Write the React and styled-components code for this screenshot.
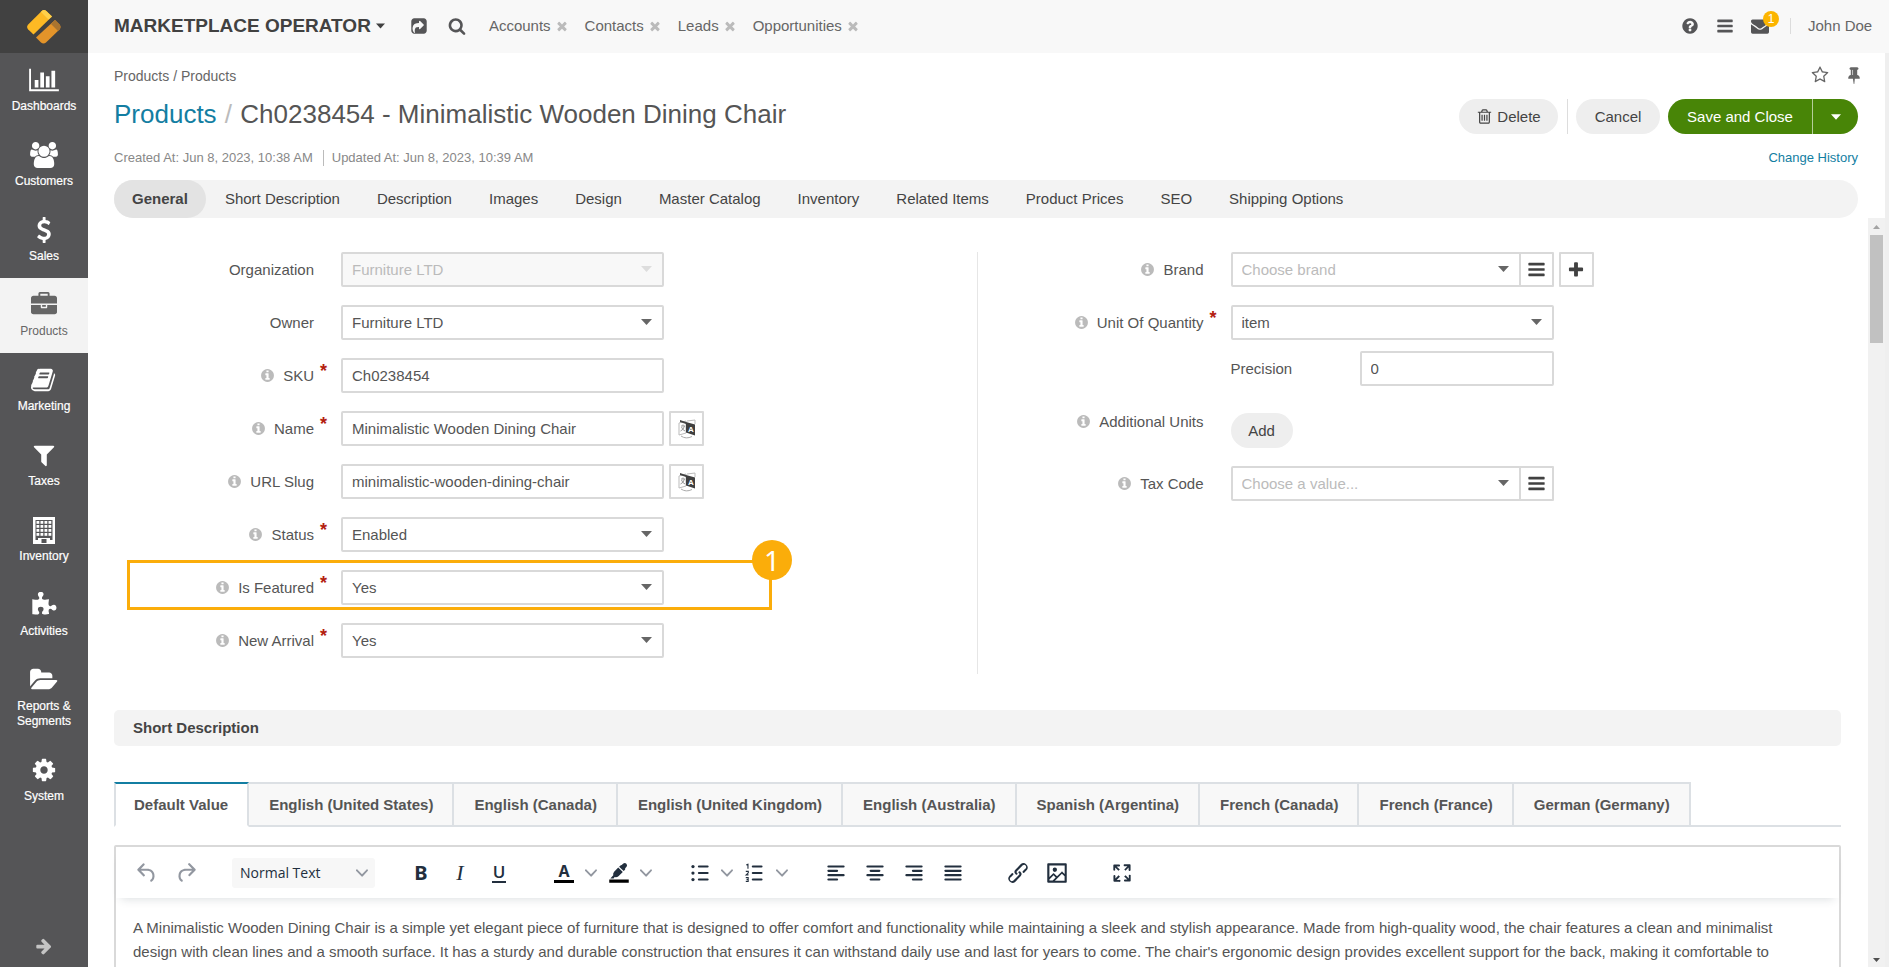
import React from "react";
import styled, { createGlobalStyle, css } from "styled-components";

const GlobalStyle = createGlobalStyle`
  *, *::before, *::after { box-sizing: border-box; }
  body {
    margin: 0;
    background: #fff;
    color: #555;
    font: 15px/20px "Liberation Sans", Arial, sans-serif;
  }
  button, input, select { font: inherit; color: inherit; margin: 0; }
  button { border: 0; padding: 0; background: none; cursor: pointer; }
  a { color: inherit; text-decoration: none; }
  svg { display: block; flex: none; }
`;

/* ---------- icons ---------- */

const DISC =
  "M1664 896q0 209-103 385.5t-279.5 279.5-385.5 103-385.5-103-279.5-279.5-103-385.5 103-385.5 279.5-279.5 385.5-103 385.5 103 279.5 279.5 103 385.5z";

const ICONS = {
  chart: [2048, "M640 896v512h-256v-512h256zm384-512v1024h-256v-1024h256zm1024 1152v128h-2048v-1536h128v1408h1920zm-640-896v768h-256v-768h256zm384-384v1152h-256v-1152h256z"],
  users: [2048, "M657 896q-162 5-265 128h-134q-82 0-138-40.5t-56-118.5q0-353 124-353 6 0 43.5 21t97.5 42.5 119 21.5q67 0 133-23-5 37-5 66 0 139 81 256zm1071 637q0 120-73 189.5t-194 69.5h-874q-121 0-194-69.5t-73-189.5q0-53 3.5-103.5t14-109 26.5-108.5 43-97.5 62-81 85.5-53.5 111.5-20q10 0 43 21.5t73 48 107 48 135 21.5 135-21.5 107-48 73-48 43-21.5q61 0 111.5 20t85.5 53.5 62 81 43 97.5 26.5 108.5 14 109 3.5 103.5zm-1024-1277q0 106-75 181t-181 75-181-75-75-181 75-181 181-75 181 75 75 181zm704 384q0 159-112.5 271.5t-271.5 112.5-271.5-112.5-112.5-271.5 112.5-271.5 271.5-112.5 271.5 112.5 112.5 271.5zm576 225q0 78-56 118.5t-138 40.5h-134q-103-123-265-128 81-117 81-256 0-29-5-66 66 23 133 23 59 0 119-21.5t97.5-42.5 43.5-21q124 0 124 353zm-128-609q0 106-75 181t-181 75-181-75-75-181 75-181 181-75 181 75 75 181z"],
  dollar: [1792, "M1362 1185q0 153-99.5 263.5t-258.5 136.5v175q0 14-9 23t-23 9h-135q-13 0-22.5-9.5t-9.5-22.5v-175q-66-9-127.5-31t-101.5-44.5-74-48-46.5-37.5-17.5-18q-17-21-2-41l103-135q7-10 23-12 15-2 24 9l2 2q113 99 243 125 37 8 74 8 81 0 142.5-43t61.5-122q0-28-15-53t-33.5-42-58.5-37.5-66-32-80-32.5q-39-16-61.5-25t-61.5-26.5-62.5-31-56.5-35.5-53.5-42.5-43.5-49-35.5-58-21-66.5-8.5-78q0-138 98-242t255-134v-180q0-13 9.5-22.5t22.5-9.5h135q14 0 23 9t9 23v176q57 6 110.5 23t87 33.5 63.5 37.5 39 29 15 14q17 18 5 38l-81 146q-8 15-23 16-14 3-27-7-3-3-14.5-12t-39-26.5-58.5-32-74.5-26-85.5-11.5q-95 0-155 43t-60 111q0 26 8.5 48t29.5 41.5 39.5 33 56 31 60.5 27 70 27.5q53 20 81 31.5t76 35 75.5 42.5 62 50 53 63.5 31.5 76.5 13 94z"],
  briefcase: [1792, "M640 256h512v-128h-512v128zm1152 640v480q0 66-47 113t-113 47h-1472q-66 0-113-47t-47-113v-480h672v160q0 26 19 45t45 19h320q26 0 45-19t19-45v-160h672zm-768 0v128h-256v-128h256zm768-480v384h-1792v-384q0-66 47-113t113-47h352v-160q0-40 28-68t68-28h576q40 0 68 28t28 68v160h352q66 0 113 47t47 113z"],
  book: [1792, "M1639 478q40 57 18 129l-275 906q-19 64-76.5 107.5t-122.5 43.5h-923q-77 0-148.5-53.5t-99.5-131.5q-24-67-2-127 0-4 3-27t4-37q1-8-3-21.5t-3-19.5q2-11 8-21t16.5-23.5 16.5-23.5q23-38 45-91.5t30-91.5q3-10 .5-30t-.5-28q3-11 17-28t17-23q21-36 42-92t25-90q1-9-2.5-32t.5-28q4-13 22-30.5t22-22.5q19-26 42.5-84.5t27.5-96.5q1-8-3-25.5t-2-26.5q2-8 9-18t18-23 17-21q8-12 16.5-30.5t15-35 16-36 19.5-32 26.5-23.5 36-11.5 47.5 5.5l-1 3q38-9 51-9h761q74 0 114 56t18 130l-274 906q-36 119-71.5 153.5t-128.5 34.5h-869q-27 0-38 15-11 16-1 43 24 70 144 70h923q29 0 56-15.5t35-41.5l300-987q7-22 5-57 38 15 59 43zm-1064 2q-4 13 2 22.5t20 9.5h608q13 0 25.5-9.5t16.5-22.5l21-64q4-13-2-22.5t-20-9.5h-608q-13 0-25.5 9.5t-16.5 22.5zm-83 256q-4 13 2 22.5t20 9.5h608q13 0 25.5-9.5t16.5-22.5l21-64q4-13-2-22.5t-20-9.5h-608q-13 0-25.5 9.5t-16.5 22.5z"],
  filter: [1792, "M1595 295q17 41-14 70l-493 493v742q0 42-39 59-13 5-25 5-27 0-45-19l-256-256q-19-19-19-45v-486l-493-493q-31-29-14-70 17-39 59-39h1280q42 0 59 39z"],
  puzzle: [1792, "M1755 1083q0 81-44.5 135t-123.5 54q-41 0-77.5-17.5t-59-38-56.5-38-71-17.5q-110 0-110 124 0 39 16 115t15 115v5q-22 0-33 1-34 3-97.5 11.5t-115.5 13.5-98 5q-61 0-103-26.5t-42-83.5q0-37 17.5-71t38-56.5 38-59 17.5-77.5q0-79-54-123.5t-135-44.5q-84 0-143 45.5t-59 127.5q0 43 15 83t33.5 64.5 33.5 53 15 50.5q0 45-46 89-37 35-117 35-95 0-245-24-9-2-27.5-4t-27.5-4l-13-2q-1 0-3-1-2 0-2-1v-1024q2 1 17.5 3.5t34 5 21.5 3.5q150 24 245 24 80 0 117-35 46-44 46-89 0-22-15-50.5t-33.5-53-33.5-64.5-15-83q0-82 59-127.5t144-45.5q80 0 134 44.5t54 123.5q0 41-17.5 77.5t-38 59-38 56.5-17.5 71q0 57 42 83.5t103 26.5q64 0 180-15t163-17v2q-1 2-3.5 17.5t-5 34-3.5 21.5q-24 150-24 245 0 80 35 117 44 46 89 46 22 0 50.5-15t53-33.5 64.5-33.5 83-15q82 0 127.5 59t45.5 143z"],
  folder: [2048, "M1943 952q0 31-31 66l-336 396q-43 51-120.5 86.5t-143.5 35.5h-1088q-34 0-60.5-13t-26.5-43q0-31 31-66l336-396q43-51 120.5-86.5t143.5-35.5h1088q34 0 60.5 13t26.5 43zm-343-344v160h-832q-94 0-197 47.5t-164 119.5l-337 396-5 6q0-4-.5-12.5t-.5-12.5v-960q0-92 66-158t158-66h320q92 0 158 66t66 158v32h544q92 0 158 66t66 158z"],
  cog: [1792, "M1152 896q0-106-75-181t-181-75-181 75-75 181 75 181 181 75 181-75 75-181zm512-109v222q0 12-8 23t-20 13l-185 28q-19 54-39 91 35 50 107 138 10 12 10 25t-9 23q-27 37-99 108t-94 71q-12 0-26-9l-138-108q-44 23-91 38-16 136-29 186-7 28-36 28h-222q-14 0-24.5-8.5t-11.5-21.5l-28-184q-49-16-90-37l-141 107q-10 9-25 9-14 0-25-11-126-114-165-168-7-10-7-23 0-12 8-23 15-21 51-66.5t54-70.5q-27-50-41-99l-183-27q-13-2-21-12.5t-8-23.5v-222q0-12 8-23t19-13l186-28q14-46 39-92-40-57-107-138-10-12-10-24 0-10 9-23 26-36 98.5-107.5t94.5-71.5q13 0 26 10l138 107q44-23 91-38 16-136 29-186 7-28 36-28h222q14 0 24.5 8.5t11.5 21.5l28 184q49 16 90 37l142-107q9-9 24-9 13 0 25 10 129 119 165 170 7 8 7 22 0 12-8 23-15 21-51 66.5t-54 70.5q26 50 41 98l183 28q13 2 21 12.5t8 23.5z"],
  arrowRight: [1792, "M1600 960q0 54-37 91l-651 651q-39 37-91 37-51 0-90-37l-75-75q-38-38-38-91t38-91l293-293h-704q-52 0-84.5-37.5t-32.5-90.5v-128q0-53 32.5-90.5t84.5-37.5h704l-293-294q-38-36-38-90t38-90l75-75q38-38 90-38 53 0 91 38l651 651q37 35 37 90z"],
  share: [1792, "M1005 1197l352-352q19-19 19-45t-19-45l-352-352q-30-31-69-14-40 17-40 59v160q-119 0-216 19.5t-162.5 51-114 79-76.5 95.5-44.5 109-21.5 111.5-5 110.5q0 181 167 404 11 12 25 12 7 0 13-3 22-9 19-33-44-354 62-473 46-52 130-75.5t224-23.5v160q0 42 40 59 12 5 24 5 26 0 45-19zm659-781v960q0 119-84.5 203.5t-203.5 84.5h-960q-119 0-203.5-84.5t-84.5-203.5v-960q0-119 84.5-203.5t203.5-84.5h960q119 0 203.5 84.5t84.5 203.5z"],
  search: [1792, "M1216 832q0-185-131.5-316.5t-316.5-131.5-316.5 131.5-131.5 316.5 131.5 316.5 316.5 131.5 316.5-131.5 131.5-316.5zm512 832q0 52-38 90t-90 38q-54 0-90-38l-343-342q-179 124-399 124-143 0-273.5-55.5t-225-150-150-225-55.5-273.5 55.5-273.5 150-225 225-150 273.5-55.5 273.5 55.5 225 150 150 225 55.5 273.5q0 220-124 399l343 343q37 37 37 90z"],
  close: [1792, "M1490 1322q0 40-28 68l-136 136q-28 28-68 28t-68-28l-294-294-294 294q-28 28-68 28t-68-28l-136-136q-28-28-28-68t28-68l294-294-294-294q-28-28-28-68t28-68l136-136q28-28 68-28t68 28l294 294 294-294q28-28 68-28t68 28l136 136q28 28 28 68t-28 68l-294 294 294 294q28 28 28 68z"],
  help: [1792, "M1024 1376v-192q0-14-9-23t-23-9h-192q-14 0-23 9t-9 23v192q0 14 9 23t23 9h192q14 0 23-9t9-23zm256-672q0-88-55.5-163t-138.5-116-170-41q-243 0-371 213-15 24 8 42l132 100q7 6 19 6 16 0 25-12 53-68 86-92 34-24 86-24 48 0 85.5 26t37.5 59q0 38-20 61t-68 45q-63 28-115.5 86.5t-52.5 125.5v36q0 14 9 23t23 9h192q14 0 23-9t9-23q0-19 21.5-49.5t54.5-49.5q32-18 49-28.5t46-35 44.5-48 28-60.5 12.5-81z" + DISC],
  info: [1792, "M1152 1376v-160q0-14-9-23t-23-9h-96v-512q0-14-9-23t-23-9h-320q-14 0-23 9t-9 23v160q0 14 9 23t23 9h96v320h-96q-14 0-23 9t-9 23v160q0 14 9 23t23 9h448q14 0 23-9t9-23zm-128-896v-160q0-14-9-23t-23-9h-192q-14 0-23 9t-9 23v160q0 14 9 23t23 9h192q14 0 23-9t9-23z" + DISC],
  bars: [1792, "M1664 1344v128q0 26-19 45t-45 19h-1408q-26 0-45-19t-19-45v-128q0-26 19-45t45-19h1408q26 0 45 19t19 45zm0-512v128q0 26-19 45t-45 19h-1408q-26 0-45-19t-19-45v-128q0-26 19-45t45-19h1408q26 0 45 19t19 45zm0-512v128q0 26-19 45t-45 19h-1408q-26 0-45-19t-19-45v-128q0-26 19-45t45-19h1408q26 0 45 19t19 45z"],
  envelope: [1792, "M1792 710v794q0 66-47 113t-113 47h-1472q-66 0-113-47t-47-113v-794q44 49 101 87 362 246 497 345 57 42 92.5 65.5t94.5 48 110 24.5h2q51 0 110-24.5t94.5-48 92.5-65.5q170-123 498-345 57-39 100-87zm0-294q0 79-49 151t-122 123q-376 261-468 325-10 7-42.5 31t-54 38.5-52 32.5-57.5 27-50 9h-2q-23 0-50-9t-57.5-27-52-32.5-54-38.5-42.5-31q-91-64-262-182.5t-205-142.5q-62-42-117-115.5t-55-136.5q0-78 41.5-130t118.5-52h1472q65 0 112.5 47t47.5 113z"],
  plus: [1792, "M1600 736v192q0 40-28 68t-68 28h-416v416q0 40-28 68t-68 28h-192q-40 0-68-28t-28-68v-416h-416q-40 0-68-28t-28-68v-192q0-40 28-68t68-28h416v-416q0-40 28-68t68-28h192q40 0 68 28t28 68v416h416q40 0 68 28t28 68z"],
  star: [1792, "M1201 1004l306-297-422-62-189-382-189 382-422 62 306 297-73 421 378-199 377 199zm527-357q0 22-26 48l-363 354 86 500q1 7 1 20 0 50-41 50-19 0-40-12l-449-236-449 236q-22 12-40 12-21 0-31.5-14.5t-10.5-35.5q0-6 2-20l86-500-364-354q-25-27-25-48 0-37 56-46l502-73 225-455q19-41 49-41t49 41l225 455 502 73q56 9 56 46z"],
  pin: [1792, "M800 864v-448q0-14-9-23t-23-9-23 9-9 23v448q0 14 9 23t23 9 23-9 9-23zm672 352q0 26-19 45t-45 19h-429l-51 483q-2 12-10.5 20.5t-20.5 8.5h-1q-27 0-32-27l-76-485h-404q-26 0-45-19t-19-45q0-123 78.5-221.5t177.5-98.5v-512q-52 0-90-38t-38-90 38-90 90-38h640q52 0 90 38t38 90-38 90-90 38v512q99 0 177.5 98.5t78.5 221.5z"],
  trash: [1792, "M704 736v576q0 14-9 23t-23 9h-64q-14 0-23-9t-9-23v-576q0-14 9-23t23-9h64q14 0 23 9t9 23zm256 0v576q0 14-9 23t-23 9h-64q-14 0-23-9t-9-23v-576q0-14 9-23t23-9h64q14 0 23 9t9 23zm256 0v576q0 14-9 23t-23 9h-64q-14 0-23-9t-9-23v-576q0-14 9-23t23-9h64q14 0 23 9t9 23zm128 724v-948h-896v948q0 22 7 40.5t14.5 27 10.5 8.5h832q3 0 10.5-8.5t14.5-27 7-40.5zm-672-1076h448l-48-117q-7-9-17-11h-317q-10 2-17 11zm928 32v64q0 14-9 23t-23 9h-96v948q0 83-47 143.5t-113 60.5h-832q-66 0-113-58.5t-47-141.5v-952h-96q-14 0-23-9t-9-23v-64q0-14 9-23t23-9h309l70-167q15-37 54-63t79-26h320q40 0 79 26t54 63l70 167h309q14 0 23 9t9 23z"],
};

const Icon = ({ name, size = 18 }) => {
  const [w, d] = ICONS[name];
  return (
    <svg viewBox={`0 0 ${w} 1792`} height={size} width={Math.round((size * w) / 1792)} fill="currentColor" aria-hidden="true">
      <path fillRule="evenodd" d={d} />
    </svg>
  );
};

const BuildingIcon = () => (
  <svg width="26" height="27" viewBox="0 0 26 27" aria-hidden="true">
    <path fill="currentColor" d="M2 0h22v27H2z" />
    <path fill="#555557" d="M4.500 3h17v20H19v-2H7v2H4.500zM10.500 22h5v4h-5z" />
    <g fill="currentColor">
      {[4, 8, 12, 16].map((y) =>
        [6, 10, 14, 18].map((x) => <rect key={`${x}-${y}`} x={x - 0.5} y={y} width="2.800" height="2.800" />)
      )}
    </g>
  </svg>
);

const Logo = () => (
  <svg width="34" height="34" viewBox="0 0 34 34" aria-hidden="true">
    <path fill="#fdb924" d="M14.500 1.200Q17-1.200 19.500 1.200L25 6.500 6.500 24.500 1.200 19.500Q-1 17 1.200 14.500Z" />
    <path fill="#ffd04a" d="M14.500 1.200Q17-1.200 19.500 1.200L25 6.500 21.500 9.500 14 2z" />
    <path fill="#e3942a" d="M28 10L32.500 14.500Q34.500 17 32.500 19.500L19 32.500Q16.500 34.500 14 32.500L9 27.500Z" />
    <path fill="#a9742f" d="M28 10L32.500 14.500Q34.500 17 32.500 19.500L31 21 24 14z" />
  </svg>
);

const TranslateIcon = () => (
  <svg width="18" height="20" viewBox="0 0 18 20" aria-hidden="true">
    <path d="M1 4l7-2v12l-7 2z" fill="#fff" stroke="#bbb" />
    <path d="M2 1l6 2v2L2 3z" fill="#444" />
    <path d="M3 7h4M5 5.500v1.500M6.500 7q-1 4-4 5M3.500 8q1 3 3.500 4" fill="none" stroke="#999" />
    <path d="M9 2l8-1v4" fill="none" stroke="#bbb" />
    <path d="M8 3l9 2.500v11l-9-3z" fill="#3f3f3f" />
    <text x="10" y="13" fontSize="8" fontWeight="700" fill="#fff">A</text>
    <path d="M3 17q5 3.500 11 .5" fill="none" stroke="#aaa" />
  </svg>
);

const Caret = ({ width = 11 }) => (
  <svg width={width} height="6" viewBox="0 0 11 6" fill="currentColor" aria-hidden="true">
    <path d="M0 0h11L5.500 6z" />
  </svg>
);

const EDITOR_ICONS = {
  undo: <path d="M6.400 8H12c3.700 0 6.200 2 6.800 5.100.6 2.700-.4 5.600-2.300 6.800a1 1 0 0 1-1-1.800c1.100-.6 1.800-2.700 1.400-4.600-.5-2.100-2.100-3.500-4.900-3.500H6.400l3.300 3.300a1 1 0 1 1-1.400 1.400l-5-5a1 1 0 0 1 0-1.400l5-5a1 1 0 0 1 1.400 1.400L6.400 8Z" />,
  redo: <path d="M17.600 10H12c-2.800 0-4.400 1.400-4.900 3.500-.4 2 .3 4 1.400 4.600a1 1 0 1 1-1 1.800c-2-1.200-2.900-4.100-2.300-6.800.6-3 3-5.100 6.800-5.100h5.600l-3.300-3.300a1 1 0 1 1 1.400-1.400l5 5a1 1 0 0 1 0 1.400l-5 5a1 1 0 0 1-1.400-1.400l3.300-3.300Z" />,
  highlight: (
    <>
      <path d="M3 18h18v3H3z" fill="#000" />
      <path d="M14.500 4.500l1.500-1.300q1.500-1 2.800.2 1.200 1.300.2 2.800l-1.300 1.500q.3.900-.4 1.500l-1 1-4.200-4 1-1q.6-.7 1.400-.7zM11.300 7l4.200 4-4 4q-1.500 1.300-3.500.8L7 17H4l2.700-3q-.5-1.700.8-3.200z" />
    </>
  ),
  bullets: (
    <>
      <path d="M11 5h8a1 1 0 0 1 0 2h-8a1 1 0 0 1 0-2Zm0 6h8a1 1 0 0 1 0 2h-8a1 1 0 0 1 0-2Zm0 6h8a1 1 0 0 1 0 2h-8a1 1 0 0 1 0-2Z" />
      <circle cx="5.500" cy="6" r="1.500" />
      <circle cx="5.500" cy="12" r="1.500" />
      <circle cx="5.500" cy="18" r="1.500" />
    </>
  ),
  numbers: (
    <>
      <path d="M10 5h8a1 1 0 0 1 0 2h-8a1 1 0 0 1 0-2Zm0 6h8a1 1 0 0 1 0 2h-8a1 1 0 0 1 0-2Zm0 6h8a1 1 0 0 1 0 2h-8a1 1 0 0 1 0-2Z" />
      <path d="M4 4.500l1.500-.5v4M3.500 10.500h2.300v1.300l-2 1.900H6M3.500 16.300h2.200v3.400H3.500M4.200 18h1.500" fill="none" stroke="currentColor" />
    </>
  ),
  left: <path d="M5 5h14a1 1 0 0 1 0 2H5a1 1 0 0 1 0-2Zm0 4h8a1 1 0 0 1 0 2H5a1 1 0 0 1 0-2Zm0 4h14a1 1 0 0 1 0 2H5a1 1 0 0 1 0-2Zm0 4h8a1 1 0 0 1 0 2H5a1 1 0 0 1 0-2Z" />,
  center: <path d="M5 5h14a1 1 0 0 1 0 2H5a1 1 0 0 1 0-2Zm3 4h8a1 1 0 0 1 0 2H8a1 1 0 0 1 0-2Zm-3 4h14a1 1 0 0 1 0 2H5a1 1 0 0 1 0-2Zm3 4h8a1 1 0 0 1 0 2H8a1 1 0 0 1 0-2Z" />,
  right: <path d="M5 5h14a1 1 0 0 1 0 2H5a1 1 0 0 1 0-2Zm6 4h8a1 1 0 0 1 0 2h-8a1 1 0 0 1 0-2Zm-6 4h14a1 1 0 0 1 0 2H5a1 1 0 0 1 0-2Zm6 4h8a1 1 0 0 1 0 2h-8a1 1 0 0 1 0-2Z" />,
  justify: <path d="M5 5h14a1 1 0 0 1 0 2H5a1 1 0 0 1 0-2Zm0 4h14a1 1 0 0 1 0 2H5a1 1 0 0 1 0-2Zm0 4h14a1 1 0 0 1 0 2H5a1 1 0 0 1 0-2Zm0 4h14a1 1 0 0 1 0 2H5a1 1 0 0 1 0-2Z" />,
  link: <path d="M6.200 12.300a1 1 0 0 1 1.400 1.400l-2 2a2 2 0 1 0 2.600 2.800l4.800-4.800a1 1 0 0 0 0-1.400 1 1 0 1 1 1.400-1.300 2.900 2.900 0 0 1 0 4L9.600 20a3.900 3.900 0 0 1-5.500-5.500l2-2Zm11.600-.6a1 1 0 0 1-1.400-1.400l2-2a2 2 0 1 0-2.600-2.800L11 10.300a1 1 0 0 0 0 1.400A1 1 0 1 1 9.600 13a2.900 2.900 0 0 1 0-4L14.400 4a3.900 3.900 0 0 1 5.500 5.500l-2 2Z" />,
  image: <path d="m5 15.700 3.300-3.200c.3-.3.700-.3 1 0L12 15l4.100-4c.3-.4.8-.4 1 0l2 1.900V5H5v10.700ZM5 18V19h3l2.800-2.900-2-2L5 17.900Zm14-3-2.500-2.400-6.400 6.500H19v-4ZM4 3h16c.6 0 1 .4 1 1v16c0 .6-.4 1-1 1H4a1 1 0 0 1-1-1V4c0-.6.4-1 1-1Zm6 8a2 2 0 1 0 0-4 2 2 0 0 0 0 4Z" />,
  fullscreen: <path d="m15.300 10-1.200-1.300 2.900-3h-2.300a.9.9 0 1 1 0-1.700H19c.5 0 .9.4.9.9v4.400a.9.9 0 1 1-1.800 0V7l-2.900 3Zm0 4 3 3v-2.300a.9.9 0 1 1 1.700 0V19c0 .5-.4.9-.9.9h-4.400a.9.9 0 1 1 0-1.800H17l-3-2.900 1.300-1.200ZM10 15.400l-2.900 3h2.300a.9.9 0 1 1 0 1.700H5a.9.9 0 0 1-.9-.9v-4.400a.9.9 0 1 1 1.800 0V17l2.900-3 1.200 1.300ZM8.700 10 5.700 7v2.300a.9.9 0 0 1-1.700 0V5c0-.5.4-.9.9-.9h4.400a.9.9 0 0 1 0 1.800H7l3 2.900-1.300 1.200Z" />,
};

const EditorIcon = ({ name }) => (
  <svg width="26" height="26" viewBox="0 0 24 24" fill="currentColor" aria-hidden="true">
    {EDITOR_ICONS[name]}
  </svg>
);

const Chevron = () => (
  <svg width="12" height="12" viewBox="0 0 10 10" fill="#9297a0" aria-hidden="true">
    <path d="M8.700 2.200c.3-.3.8-.3 1 0 .4.4.4.9 0 1.200L5.700 7.800c-.3.3-.9.3-1.200 0L.2 3.400a.8.8 0 0 1 0-1.200c.3-.3.8-.3 1.100 0L5 6l3.700-3.800Z" />
  </svg>
);

/* ---------- page frame ---------- */

const Shell = styled.div`
  display: flex;
  height: 100vh;
  overflow: hidden;
`;

const Sidebar = styled.nav`
  display: flex;
  flex: none;
  flex-direction: column;
  width: 88px;
  background: #555557;
  color: #fff;
`;

const LogoLink = styled.a`
  display: grid;
  place-items: center;
  height: 53px;
  background: #414141;
`;

const MenuItem = styled.a`
  display: flex;
  flex-direction: column;
  align-items: center;
  gap: 5px;
  padding: 14px 8px;
  font-size: 12px;
  line-height: 15px;
  text-align: center;
  -webkit-text-stroke: ${(p) => (p.$active ? "0" : "0.2px")};
  background: ${(p) => (p.$active ? "#f3f3f3" : "transparent")};
  color: ${(p) => (p.$active ? "#666" : "#fff")};
`;

const MenuGlyph = styled.span`
  display: flex;
  height: 27px;
`;

const CollapseButton = styled.button`
  display: grid;
  place-items: center;
  height: 42px;
  margin-top: auto;
  color: #c4c4c4;
`;

const Main = styled.div`
  display: flex;
  flex: 1;
  flex-direction: column;
  min-width: 0;
`;

const TopBar = styled.header`
  display: flex;
  flex: none;
  align-items: center;
  height: 53px;
  padding: 0 0 2px 26px;
  overflow: hidden;
  background: #f8f8f8;
  color: #555557;
  white-space: nowrap;
`;

const OrgSwitch = styled.button`
  display: flex;
  align-items: center;
  gap: 5px;
  margin-right: 25px;
  color: #414141;
  font-size: 19px;
  font-weight: 700;
`;

const TopIcon = styled.button`
  display: flex;
  margin-right: ${(p) => p.$gap || 18}px;
`;

const Pinned = styled.span`
  display: flex;
  align-items: center;
  gap: 4px;
  margin-right: 16px;
  color: #666;

  button { color: #bbb; }
`;

const TopRight = styled.div`
  display: flex;
  align-items: center;
  margin-left: auto;
`;

const MailButton = styled.button`
  position: relative;
  display: flex;
  margin-right: 21px;
`;

const Badge = styled.span`
  position: absolute;
  top: -6px;
  left: 12px;
  width: 16px;
  height: 16px;
  border-radius: 8px;
  background: #fcb500;
  color: #fff;
  font-size: 12px;
  line-height: 16px;
`;

const UserMenu = styled.button`
  display: flex;
  align-items: center;
  gap: 17px;
  width: 99px;
  color: #666;

  &::before {
    content: "";
    height: 16px;
    border-left: 1px solid #dcdcdc;
  }
`;

const Body = styled.main`
  display: flex;
  flex: 1;
  flex-direction: column;
  min-height: 0;
  border-right: 4px solid #efefef;
`;

/* ---------- page head ---------- */

const PageHead = styled.div`
  flex: none;
  padding: 13px 27px 0 26px;
`;

const HeadRow = styled.div`
  display: flex;
  align-items: flex-start;
  justify-content: space-between;
  margin-top: ${(p) => p.$top || 0}px;
`;

const Breadcrumb = styled.div`
  color: #666;
  font-size: 14px;
`;

const PageTools = styled.div`
  display: flex;
  gap: 16px;
  margin-right: -5px;
  color: #666;
`;

const Title = styled.h1`
  margin: 0;
  color: #555;
  font-size: 26px;
  font-weight: 400;
  line-height: 30px;

  a { color: #137ea2; }
  span { margin: 0 1px; color: #bbb; }
`;

const Actions = styled.div`
  display: flex;
  align-items: center;
`;

const pill = css`
  display: flex;
  align-items: center;
  justify-content: center;
  height: 35px;
  background: #eee;
  color: #444;
`;

const PillButton = styled.button`
  ${pill}
  gap: 4px;
  min-width: ${(p) => p.$min || 62}px;
  padding: 0 16px;
  border-radius: 18px;
`;

const Rule = styled.span`
  width: 1px;
  height: 35px;
  margin: 0 8px 0 9px;
  background: #ddd;
`;

const SaveGroup = styled.div`
  display: flex;
  margin-left: 8px;
`;

const SaveButton = styled.button`
  ${pill}
  width: 144px;
  border-radius: 18px 0 0 18px;
  background: #488507;
  color: #fff;
`;

const SaveMenu = styled.button`
  ${pill}
  width: 46px;
  border-left: 1px solid #b5ce9b;
  border-radius: 0 18px 18px 0;
  background: #488507;
  color: #fff;
`;

const Meta = styled.div`
  display: flex;
  color: #888;
  font-size: 13px;
  line-height: 16px;

  span + span {
    margin-left: 10px;
    padding-left: 8px;
    border-left: 1px solid #bbb;
  }
`;

const HistoryLink = styled.a`
  color: #137ea2;
  font-size: 13px;
  line-height: 16px;
`;

const PageTabs = styled.div`
  display: flex;
  gap: 1px;
  height: 38px;
  margin-top: 14px;
  border-radius: 19px;
  background: #f3f3f3;
`;

const PageTab = styled.button`
  padding: 0 18px;
  border-radius: 19px;
  color: #444;
  background: ${(p) => (p.$active ? "#e3e3e3" : "transparent")};
  font-weight: ${(p) => (p.$active ? 700 : 400)};
`;

/* ---------- scroll region ---------- */

const ScrollArea = styled.div`
  display: flex;
  flex: 1;
  min-height: 0;
`;

const ScrollContent = styled.div`
  flex: 1;
  min-width: 0;
  padding: 34px 27px 0 26px;
  overflow: hidden;
`;

const ScrollBar = styled.div`
  display: flex;
  flex: none;
  flex-direction: column;
  align-items: center;
  width: 17px;
  padding: 7px 0 5px;
  background: #f1f1f1;
  color: #505050;
`;

const ScrollThumb = styled.div`
  width: 13px;
  height: 108px;
  margin: 6px 0 auto;
  background: #c1c1c1;
`;

/* ---------- form ---------- */

const Columns = styled.div`
  display: grid;
  grid-template-columns: 1fr 1fr;
`;

const Column = styled.div`
  display: flex;
  flex-direction: column;
  gap: 18px;
  padding: ${(p) => (p.$second ? "0 0 16px 26px" : "0 0 16px")};
  border-right: ${(p) => (p.$second ? "0" : "1px solid #e6e6e6")};
`;

const Row = styled.div`
  position: relative;
  display: grid;
  grid-template-columns: 200px 27px 1fr;
  align-items: start;
`;

const LabelCell = styled.div`
  display: flex;
  align-items: center;
  justify-content: flex-end;
  gap: 8px;
  height: 35px;
  color: #555;

  svg { color: #bbb; }
`;

const Required = styled.span`
  padding: 3px 0 0 6px;
  color: #b3200f;
  font-size: 18px;
  font-weight: 700;
`;

const Controls = styled.div`
  display: flex;
  gap: ${(p) => (p.$joined ? 0 : 5)}px;
`;

const box = css`
  width: 100%;
  height: 35px;
  padding: 0 9px;
  border: 2px solid #d9d9d9;
  border-radius: 2px;
  background: #fff;
`;

const FieldWrap = styled.div`
  position: relative;
  display: flex;
  width: ${(p) => p.$width || 323}px;
  color: ${(p) => (p.$muted ? "#bbb" : "#555")};

  > svg {
    position: absolute;
    top: 14px;
    right: 12px;
    color: ${(p) => (p.$off ? "#ddd" : "#666")};
    pointer-events: none;
  }
`;

const TextInput = styled.input`
  ${box}
`;

const SelectBox = styled.select`
  ${box}
  appearance: none;
  opacity: 1;

  &:disabled {
    background: #f8f8f8;
    color: #bbb;
  }
`;

const SquareButton = styled.button`
  display: grid;
  place-items: center;
  width: 35px;
  height: 35px;
  margin-left: ${(p) => (p.$joined ? -2 : 0)}px;
  border: 2px solid #d9d9d9;
  border-radius: 1px;
  background: #fff;
  color: #414141;
`;

const UnitStack = styled.div`
  display: flex;
  flex-direction: column;
  gap: 11px;
  width: 323px;
`;

const PrecisionRow = styled.div`
  display: flex;
  align-items: center;
  justify-content: space-between;
`;

const AddWrap = styled.div`
  display: flex;
  padding: 9px 0 0;
`;

const Callout = styled.div`
  position: absolute;
  top: -10px;
  left: 13px;
  width: 645px;
  height: 50px;
  border: 3px solid #fbad0a;
  pointer-events: none;
`;

const CalloutBadge = styled.span`
  position: absolute;
  top: -23px;
  right: -23px;
  width: 40px;
  height: 40px;
  border-radius: 20px;
  background: #fbad0a;
  color: #fff;
  font: 28px/40px "Noto Sans", sans-serif;
  text-align: center;
`;

/* ---------- short description ---------- */

const SectionTitle = styled.h2`
  margin: 36px 0;
  padding: 8px 19px;
  border-radius: 5px;
  background: #f3f3f3;
  color: #444;
  font-size: 15px;
  line-height: 20px;
`;

const LangTabs = styled.div`
  display: flex;
  box-shadow: inset 0 -2px #dce0e4;
`;

const LangTab = styled.button`
  height: 45px;
  padding: ${(p) => (p.$active ? "0 19px 0 18px" : "0 19px 0 20px")};
  border: 2px solid #dce0e4;
  border-left-width: ${(p) => (p.$active ? 2 : 0)}px;
  border-top-color: ${(p) => (p.$active ? "#137ea2" : "#dce0e4")};
  border-bottom-color: ${(p) => (p.$active ? "#fff" : "#dce0e4")};
  background: ${(p) => (p.$active ? "#fff" : "#f8f8f8")};
  color: #555;
  font-weight: 700;
  white-space: nowrap;
`;

const Editor = styled.div`
  margin-top: 18px;
  border: 2px solid #d9d9d9;
  border-radius: 2px;
`;

const Toolbar = styled.div`
  display: flex;
  align-items: center;
  gap: 27px;
  height: 51px;
  padding-left: 12px;
  box-shadow: 0 6px 9px -5px rgba(34, 47, 62, 0.16);
  color: #222f3e;
`;

const ToolGroup = styled.div`
  display: flex;
  align-items: center;
  gap: 1px;
`;

const Tool = styled.button`
  display: grid;
  place-items: center;
  width: 38px;
  height: 31px;
  color: ${(p) => (p.$muted ? "#9297a0" : "#222f3e")};
`;

const Split = styled.div`
  display: flex;
`;

const SplitArrow = styled.button`
  display: grid;
  place-items: center;
  width: 16px;
`;

const LetterB = styled.b`
  font: 700 20px/26px "Noto Sans", sans-serif;
`;

const LetterI = styled.i`
  font: italic 22px/26px "Liberation Serif", serif;
`;

const LetterU = styled.span`
  height: 20px;
  padding: 0 1px;
  border-bottom: 2px solid;
  font: 600 17px/18px "Open Sans", sans-serif;
`;

const LetterA = styled.b`
  width: 20px;
  border-bottom: 3px solid #000;
  font: 700 16px/17px "Noto Sans", sans-serif;
`;

const FormatWrap = styled.div`
  position: relative;
  width: 143px;

  svg {
    position: absolute;
    top: 9px;
    right: 7px;
    pointer-events: none;
  }
`;

const FormatSelect = styled.select`
  width: 100%;
  height: 30px;
  padding: 0 8px;
  border: 0;
  border-radius: 3px;
  appearance: none;
  background: #f7f7f7;
  color: #222f3e;
  font: 14px/20px "Open Sans", sans-serif;
`;

const Copy = styled.div`
  padding: 18px 17px;
  color: #555;
  line-height: 24px;

  p { margin: 0; }
`;

/* ---------- data ---------- */

const MENU = [
  ["Dashboards", "chart"],
  ["Customers", "users"],
  ["Sales", "dollar"],
  ["Products", "briefcase"],
  ["Marketing", "book"],
  ["Taxes", "filter"],
  ["Inventory", "building"],
  ["Activities", "puzzle"],
  ["Reports & Segments", "folder"],
  ["System", "cog"],
];

const TABS = ["General", "Short Description", "Description", "Images", "Design", "Master Catalog", "Inventory", "Related Items", "Product Prices", "SEO", "Shipping Options"];

const LANGUAGES = ["Default Value", "English (United States)", "English (Canada)", "English (United Kingdom)", "English (Australia)", "Spanish (Argentina)", "French (Canada)", "French (France)", "German (Germany)"];

/* ---------- field pieces ---------- */

const Field = ({ id, label, info, required, note, children }) => (
  <Row>
    <LabelCell>
      {info && <Icon name="info" size={15} />}
      <label htmlFor={id}>{label}</label>
    </LabelCell>
    {required ? <Required>*</Required> : <span />}
    {children}
    {note && (
      <Callout>
        <CalloutBadge>{note}</CalloutBadge>
      </Callout>
    )}
  </Row>
);

const Select = ({ id, value, width, muted, disabled }) => (
  <FieldWrap $width={width} $muted={muted} $off={disabled}>
    <SelectBox id={id} disabled={disabled} defaultValue={value}>
      <option>{value}</option>
    </SelectBox>
    <Caret />
  </FieldWrap>
);

const Text = ({ id, value, width }) => (
  <FieldWrap $width={width}>
    <TextInput id={id} type="text" defaultValue={value} />
  </FieldWrap>
);

const SplitTool = ({ label, children }) => (
  <Split>
    <Tool aria-label={label}>{children}</Tool>
    <SplitArrow aria-label={`${label} options`}>
      <Chevron />
    </SplitArrow>
  </Split>
);

export default function App() {
  return (
    <Shell>
      <GlobalStyle />
      <Sidebar>
        <LogoLink href="#" aria-label="Home">
          <Logo />
        </LogoLink>
        {MENU.map(([name, icon]) => (
          <MenuItem key={name} href="#" $active={name === "Products"}>
            <MenuGlyph>{icon === "building" ? <BuildingIcon /> : <Icon name={icon} size={26} />}</MenuGlyph>
            {name}
          </MenuItem>
        ))}
        <CollapseButton aria-label="Expand menu">
          <Icon name="arrowRight" size={18} />
        </CollapseButton>
      </Sidebar>

      <Main>
        <TopBar>
          <OrgSwitch>
            MARKETPLACE OPERATOR <Caret width={9} />
          </OrgSwitch>
          <TopIcon aria-label="Shortcuts" $gap={20}>
            <Icon name="share" />
          </TopIcon>
          <TopIcon aria-label="Search" $gap={23}>
            <Icon name="search" />
          </TopIcon>
          {["Accounts", "Contacts", "Leads", "Opportunities"].map((name) => (
            <Pinned key={name}>
              <a href="#">{name}</a>
              <button aria-label={`Close ${name}`}>
                <Icon name="close" size={14} />
              </button>
            </Pinned>
          ))}
          <TopRight>
            <TopIcon aria-label="Help" $gap={17}>
              <Icon name="help" />
            </TopIcon>
            <TopIcon aria-label="History" $gap={17}>
              <Icon name="bars" />
            </TopIcon>
            <MailButton aria-label="Messages">
              <Icon name="envelope" />
              <Badge>1</Badge>
            </MailButton>
            <UserMenu>
              John Doe <Caret width={9} />
            </UserMenu>
          </TopRight>
        </TopBar>

        <Body>
          <PageHead>
            <HeadRow>
              <Breadcrumb>
                <a href="#">Products</a> / <a href="#">Products</a>
              </Breadcrumb>
              <PageTools>
                <button aria-label="Add to favorites"><Icon name="star" size={18} /></button>
                <button aria-label="Pin page"><Icon name="pin" size={18} /></button>
              </PageTools>
            </HeadRow>
            <HeadRow $top={13}>
              <Title>
                <a href="#">Products</a> <span>/</span> Ch0238454 - Minimalistic Wooden Dining Chair
              </Title>
              <Actions>
                <PillButton $min={99}>
                  <Icon name="trash" size={17} /> Delete
                </PillButton>
                <Rule />
                <PillButton $min={84}>Cancel</PillButton>
                <SaveGroup>
                  <SaveButton>Save and Close</SaveButton>
                  <SaveMenu aria-label="More save options">
                    <Caret width={10} />
                  </SaveMenu>
                </SaveGroup>
              </Actions>
            </HeadRow>
            <HeadRow $top={16}>
              <Meta>
                <span>Created At: Jun 8, 2023, 10:38 AM</span>
                <span>Updated At: Jun 8, 2023, 10:39 AM</span>
              </Meta>
              <HistoryLink href="#">Change History</HistoryLink>
            </HeadRow>
            <PageTabs>
              {TABS.map((name, i) => (
                <PageTab key={name} $active={i === 0}>{name}</PageTab>
              ))}
            </PageTabs>
          </PageHead>

          <ScrollArea>
            <ScrollContent>
              <Columns>
                <Column>
                  <Field id="organization" label="Organization">
                    <Select id="organization" value="Furniture LTD" disabled muted />
                  </Field>
                  <Field id="owner" label="Owner">
                    <Select id="owner" value="Furniture LTD" />
                  </Field>
                  <Field id="sku" label="SKU" info required>
                    <Text id="sku" value="Ch0238454" />
                  </Field>
                  <Field id="name" label="Name" info required>
                    <Controls>
                      <Text id="name" value="Minimalistic Wooden Dining Chair" />
                      <SquareButton aria-label="Translate name"><TranslateIcon /></SquareButton>
                    </Controls>
                  </Field>
                  <Field id="slug" label="URL Slug" info>
                    <Controls>
                      <Text id="slug" value="minimalistic-wooden-dining-chair" />
                      <SquareButton aria-label="Translate URL slug"><TranslateIcon /></SquareButton>
                    </Controls>
                  </Field>
                  <Field id="status" label="Status" info required>
                    <Select id="status" value="Enabled" />
                  </Field>
                  <Field id="featured" label="Is Featured" info required note="1">
                    <Select id="featured" value="Yes" />
                  </Field>
                  <Field id="arrival" label="New Arrival" info required>
                    <Select id="arrival" value="Yes" />
                  </Field>
                </Column>

                <Column $second>
                  <Field id="brand" label="Brand" info>
                    <Controls>
                      <Controls $joined>
                        <Select id="brand" value="Choose brand" width={290} muted />
                        <SquareButton $joined aria-label="Browse brands"><Icon name="bars" size={19} /></SquareButton>
                      </Controls>
                      <SquareButton aria-label="Create brand"><Icon name="plus" /></SquareButton>
                    </Controls>
                  </Field>
                  <Field id="unit" label="Unit Of Quantity" info required>
                    <UnitStack>
                      <Select id="unit" value="item" />
                      <PrecisionRow>
                        <label htmlFor="precision">Precision</label>
                        <Text id="precision" value="0" width={194} />
                      </PrecisionRow>
                    </UnitStack>
                  </Field>
                  <Field id="add-unit" label="Additional Units" info>
                    <AddWrap>
                      <PillButton id="add-unit">Add</PillButton>
                    </AddWrap>
                  </Field>
                  <Field id="tax" label="Tax Code" info>
                    <Controls $joined>
                      <Select id="tax" value="Choose a value..." width={290} muted />
                      <SquareButton $joined aria-label="Browse tax codes"><Icon name="bars" size={19} /></SquareButton>
                    </Controls>
                  </Field>
                </Column>
              </Columns>

              <SectionTitle>Short Description</SectionTitle>

              <LangTabs>
                {LANGUAGES.map((name, i) => (
                  <LangTab key={name} $active={i === 0}>{name}</LangTab>
                ))}
              </LangTabs>

              <Editor>
                <Toolbar>
                  <ToolGroup>
                    <Tool $muted aria-label="Undo"><EditorIcon name="undo" /></Tool>
                    <Tool $muted aria-label="Redo"><EditorIcon name="redo" /></Tool>
                  </ToolGroup>
                  <FormatWrap>
                    <FormatSelect aria-label="Text format" defaultValue="Normal Text">
                      <option>Normal Text</option>
                    </FormatSelect>
                    <Chevron />
                  </FormatWrap>
                  <ToolGroup>
                    <Tool aria-label="Bold"><LetterB>B</LetterB></Tool>
                    <Tool aria-label="Italic"><LetterI>I</LetterI></Tool>
                    <Tool aria-label="Underline"><LetterU>U</LetterU></Tool>
                  </ToolGroup>
                  <ToolGroup>
                    <SplitTool label="Text color"><LetterA>A</LetterA></SplitTool>
                    <SplitTool label="Highlight color"><EditorIcon name="highlight" /></SplitTool>
                  </ToolGroup>
                  <ToolGroup>
                    <SplitTool label="Bullet list"><EditorIcon name="bullets" /></SplitTool>
                    <SplitTool label="Numbered list"><EditorIcon name="numbers" /></SplitTool>
                  </ToolGroup>
                  <ToolGroup>
                    {["left", "center", "right", "justify"].map((name) => (
                      <Tool key={name} aria-label={`Align ${name}`}><EditorIcon name={name} /></Tool>
                    ))}
                  </ToolGroup>
                  <ToolGroup>
                    <Tool aria-label="Insert link"><EditorIcon name="link" /></Tool>
                    <Tool aria-label="Insert image"><EditorIcon name="image" /></Tool>
                  </ToolGroup>
                  <ToolGroup>
                    <Tool aria-label="Fullscreen"><EditorIcon name="fullscreen" /></Tool>
                  </ToolGroup>
                </Toolbar>
                <Copy>
                  <p>
                    A Minimalistic Wooden Dining Chair is a simple yet elegant piece of furniture that is designed to offer comfort and functionality while maintaining a sleek and stylish appearance. Made from high-quality wood, the chair features a clean and minimalist
                    <br />
                    design with clean lines and a smooth surface. It has a sturdy and durable construction that ensures it can withstand daily use and last for years to come. The chair's ergonomic design provides excellent support for the back, making it comfortable to
                  </p>
                </Copy>
              </Editor>
            </ScrollContent>
            <ScrollBar aria-hidden="true">
              <svg width="7" height="4" viewBox="0 0 7 4" fill="#a3a3a3"><path d="M0 4h7L3.500 0z" /></svg>
              <ScrollThumb />
              <svg width="7" height="4" viewBox="0 0 7 4" fill="currentColor"><path d="M0 0h7L3.500 4z" /></svg>
            </ScrollBar>
          </ScrollArea>
        </Body>
      </Main>
    </Shell>
  );
}
